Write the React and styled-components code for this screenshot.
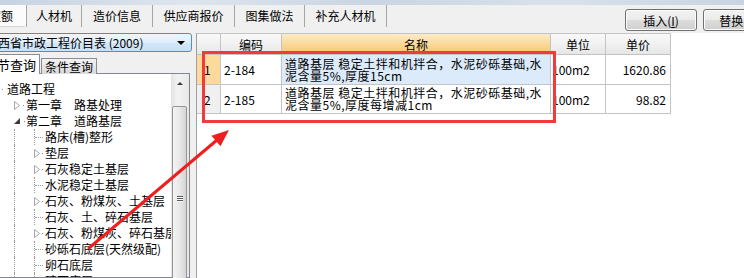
import React from 'react';
import styled, { createGlobalStyle } from 'styled-components';

const GlobalStyle = createGlobalStyle`
  html, body {
    margin: 0;
    padding: 0;
    background: #f0f0f0;
  }
  body {
    font-family: "Noto Sans CJK SC", "Liberation Sans", sans-serif;
    font-size: 12px;
    color: #000;
  }
`;

const tabs = [
  { label: '定额', width: 51, shift: -24, pad: 13, active: true },
  { label: '人材机', width: 55 },
  { label: '造价信息', width: 71 },
  { label: '供应商报价', width: 82 },
  { label: '图集做法', width: 70 },
  { label: '补充人材机', width: 82 },
];

const treeData = [
  { level: 0, text: '道路工程', type: 'root' },
  { level: 1, text: '第一章　路基处理', type: 'closed' },
  { level: 1, text: '第二章　道路基层', type: 'open' },
  { level: 2, text: '路床(槽)整形', type: 'leaf' },
  { level: 2, text: '垫层', type: 'closed' },
  { level: 2, text: '石灰稳定土基层', type: 'closed' },
  { level: 2, text: '水泥稳定土基层', type: 'leaf' },
  { level: 2, text: '石灰、粉煤灰、土基层', type: 'closed' },
  { level: 2, text: '石灰、土、碎石基层', type: 'leaf' },
  { level: 2, text: '石灰、粉煤灰、碎石基层', type: 'closed' },
  { level: 2, text: '砂砾石底层(天然级配)', type: 'leaf' },
  { level: 2, text: '卵石底层', type: 'leaf' },
  { level: 2, text: '碎石底层', type: 'leaf' },
];

const rows = [
  {
    no: 1,
    code: '2-184',
    name: ['道路基层 稳定土拌和机拌合，水泥砂砾基础,水', '泥含量5%,厚度15cm'],
    unit: '100m2',
    price: '1620.86',
    selected: true,
    height: 30,
  },
  {
    no: 2,
    code: '2-185',
    name: ['道路基层 稳定土拌和机拌合，水泥砂砾基础,水', '泥含量5%,厚度每增减1cm'],
    unit: '100m2',
    price: '98.82',
    height: 29,
  },
];

const Window = styled.div`
  position: relative;
  width: 744px;
  height: 278px;
  overflow: hidden;
  background: #f0f0f0;
  display: flex;
  flex-direction: column;
`;

const TitleStrip = styled.div`
  flex: none;
  height: 5px;
  background: linear-gradient(90deg, #c6d3e2 0%, #dde5ee 25%, #c9d5e3 50%, #d8e1eb 75%, #c8d4e2 100%);
`;

const TopBar = styled.div`
  flex: none;
  height: 28px;
  display: flex;
  align-items: flex-start;
  overflow: hidden;
`;

const TabStrip = styled.div`
  flex: none;
  display: flex;
  height: 22px;
`;

const Tab = styled.div`
  flex: none;
  box-sizing: border-box;
  width: ${(p) => p.$w}px;
  margin-left: ${(p) => p.$shift || 0}px;
  padding-left: ${(p) => p.$pad || 0}px;
  height: 22px;
  line-height: 22px;
  text-align: ${(p) => (p.$pad ? 'left' : 'center')};
  white-space: nowrap;
  overflow: hidden;
  border-right: 1px solid #a5a5a5;
  background: ${(p) => (p.$active ? '#fbfbfb' : '#f0f0f0')};
  box-shadow: ${(p) => (p.$active ? 'inset -1px 0 0 #ffffff, inset 0 -1px 0 #d5d5d5' : 'none')};
`;

const Spacer = styled.div`
  flex: none;
  width: ${(p) => p.$w}px;
`;

const ToolButton = styled.div`
  flex: none;
  box-sizing: border-box;
  width: 72px;
  height: 22px;
  margin-top: 4px;
  margin-right: 6px;
  border: 1px solid #707070;
  border-radius: 3px;
  background: linear-gradient(#f2f2f2 0%, #ebebeb 50%, #dddddd 51%, #cfcfcf 100%);
  box-shadow: inset 0 0 0 1px #fcfcfc;
  display: flex;
  align-items: center;
  justify-content: center;
  white-space: nowrap;
  font-size: 12px;
`;

const Mnemonic = styled.span`
  text-decoration: underline;
`;

const Body = styled.div`
  flex: 1;
  display: flex;
  min-height: 0;
`;

const LeftPanel = styled.div`
  flex: none;
  width: 192px;
  display: flex;
  flex-direction: column;
  overflow: hidden;
`;

const Dropdown = styled.div`
  flex: none;
  box-sizing: border-box;
  height: 19px;
  margin-left: -4px;
  width: 196px;
  border: 1px solid #4f8fc6;
  border-radius: 3px;
  background: linear-gradient(#eef6fd 0%, #e0eefb 50%, #d2e7f9 51%, #c8e1f7 100%);
  display: flex;
  align-items: center;
  overflow: hidden;
`;

const DropText = styled.span`
  flex: 1;
  margin-left: -11px;
  white-space: nowrap;
`;

const DropArrow = styled.span`
  flex: none;
  width: 0;
  height: 0;
  margin-right: 6px;
  border-left: 4px solid transparent;
  border-right: 4px solid transparent;
  border-top: 4px solid #000;
`;

const QueryTabs = styled.div`
  flex: none;
  height: 22px;
  display: flex;
  align-items: flex-end;
`;

const QueryTab = styled.div`
  flex: none;
  box-sizing: border-box;
  width: ${(p) => p.$w}px;
  margin-left: ${(p) => p.$shift || 0}px;
  height: ${(p) => (p.$active ? 20 : 16)}px;
  border: 1px solid #898c95;
  border-bottom: none;
  background: ${(p) => (p.$active ? '#ffffff' : 'linear-gradient(#f2f2f2, #dadada)')};
  display: flex;
  align-items: center;
  justify-content: ${(p) => (p.$active ? 'flex-end' : 'center')};
  padding-right: ${(p) => (p.$active ? 3 : 0)}px;
  white-space: nowrap;
  overflow: hidden;
  font-size: ${(p) => (p.$active ? 13 : 12)}px;
  position: relative;
  z-index: ${(p) => (p.$active ? 1 : 0)};
`;

const TreeBox = styled.div`
  flex: 1;
  box-sizing: border-box;
  width: 191px;
  margin-left: -1px;
  margin-top: -1px;
  border: 1px solid #828790;
  background: #fff;
  display: flex;
  min-height: 0;
`;

const TreeContent = styled.div`
  flex: 1;
  overflow: hidden;
  padding-top: 7px;
`;

const TreeRow = styled.div`
  display: flex;
  align-items: stretch;
  height: 16px;
  white-space: nowrap;
`;

const Indent = styled.div`
  flex: none;
  width: ${(p) => p.$w}px;
`;

const Guide = styled.div`
  flex: none;
  width: ${(p) => p.$w}px;
  box-sizing: border-box;
  border-left: 1px dotted #9a9a9a;
`;

const Branch = styled.div`
  flex: none;
  width: ${(p) => p.$w}px;
  display: flex;
  align-items: center;
`;

const LeafBranch = styled.div`
  flex: none;
  width: ${(p) => p.$w}px;
  box-sizing: border-box;
  border-left: 1px dotted #9a9a9a;
  display: flex;
  align-items: center;
`;

const HDots = styled.div`
  flex: 1;
  margin-right: 2px;
  border-top: 1px dotted #9a9a9a;
`;

const TreeText = styled.div`
  line-height: 16px;
`;

const Scrollbar = styled.div`
  flex: none;
  width: 17px;
  background: linear-gradient(90deg, #e4e4e4, #f2f2f2 40%, #eaeaea);
  display: flex;
  flex-direction: column;
  align-items: center;
  border-right: 1px solid #e6e6e6;
`;

const ScrollUp = styled.div`
  flex: none;
  height: 17px;
  width: 17px;
  display: flex;
  align-items: center;
  justify-content: center;
  padding-top: 2px;
  box-sizing: border-box;
`;

const UpGlyph = styled.span`
  width: 0;
  height: 0;
  border-left: 3px solid transparent;
  border-right: 3px solid transparent;
  border-bottom: 3px solid #3a3a3a;
`;

const Thumb = styled.div`
  flex: none;
  box-sizing: border-box;
  margin-top: 15px;
  width: 15px;
  height: 184px;
  border: 1px solid #959595;
  border-radius: 2px;
  background: linear-gradient(90deg, #f4f4f4 0%, #e8e8e8 50%, #d4d4d4 100%);
  display: flex;
  flex-direction: column;
  align-items: center;
  justify-content: center;
  gap: 1px;
`;

const Grip = styled.div`
  width: 6px;
  height: 1px;
  background: #5a5a5a;
  box-shadow: 0 1px 0 #ffffff;
`;

const Splitter = styled.div`
  flex: none;
  width: 4px;
`;

const RightPanel = styled.div`
  flex: 1;
  background: #fff;
  border-left: 1px solid #a0a0a0;
  min-width: 0;
`;

const Grid = styled.div`
  display: grid;
  grid-template-columns: 24px 61px 269px 55px 65px;
  width: 474px;
  border-top: 1px solid #c4c4c4;
`;

const HeadCell = styled.div`
  box-sizing: border-box;
  height: 21px;
  border-right: 1px solid #c4c4c4;
  border-bottom: 1px solid #c4c4c4;
  background: ${(p) =>
    p.$hot
      ? 'linear-gradient(#fdebc6 0%, #fbd99a 50%, #f5c56c 100%)'
      : 'linear-gradient(#f9f9f9 0%, #f1f1f1 50%, #e6e6e6 100%)'};
  display: flex;
  align-items: center;
  justify-content: center;
  font-size: 12px;
`;

const Cell = styled.div`
  box-sizing: border-box;
  height: ${(p) => p.$h}px;
  border-right: 1px solid #c4c4c4;
  border-bottom: 1px solid #c4c4c4;
  background: ${(p) => p.$bg || '#fff'};
  display: flex;
  align-items: center;
  justify-content: ${(p) => (p.$right ? 'flex-end' : 'flex-start')};
  padding: 0 ${(p) => p.$pr ?? 0}px 0 ${(p) => p.$pl ?? 3}px;
  white-space: nowrap;
  overflow: hidden;
  font-size: 12px;
`;

const NameLines = styled.div`
  display: flex;
  flex-direction: column;
  letter-spacing: 0.5px;
  line-height: 12px;
`;

const Highlight = styled.div`
  position: absolute;
  left: 202px;
  top: 51px;
  width: 354px;
  height: 72px;
  box-sizing: border-box;
  border: 3px solid #f23a3a;
  pointer-events: none;
`;

const Arrow = styled.svg`
  position: absolute;
  left: 0;
  top: 0;
  pointer-events: none;
`;

function Expander({ type }) {
  if (type === 'open') {
    return (
      <svg width="7" height="7" viewBox="0 0 7 7">
        <polygon points="6,0 6,6 0,6" fill="#3c3c3c" />
      </svg>
    );
  }
  return (
    <svg width="6" height="9" viewBox="0 0 6 9">
      <polygon points="0.5,0.5 5.5,4.5 0.5,8.5" fill="#fff" stroke="#a6a6a6" strokeWidth="1" />
    </svg>
  );
}

const Dot = styled.span`
  width: 1px;
  height: 1px;
  margin-left: ${(p) => p.$ml}px;
  background: #8a8a8a;
`;

function TreeItem({ level, text, type }) {
  if (level === 0) {
    return (
      <TreeRow>
        <Branch $w={7}>
          <Dot $ml={2} />
        </Branch>
        <TreeText>{text}</TreeText>
      </TreeRow>
    );
  }
  if (level === 1) {
    return (
      <TreeRow>
        <Indent $w={14} />
        <Branch $w={12}>
          <Expander type={type} />
          <Dot $ml={3} />
        </Branch>
        <TreeText>{text}</TreeText>
      </TreeRow>
    );
  }
  return (
    <TreeRow>
      <Indent $w={14} />
      <Guide $w={20} />
      {type === 'leaf' ? (
        <LeafBranch $w={11}>
          <HDots />
        </LeafBranch>
      ) : (
        <Branch $w={11}>
          <Expander type={type} />
          <Dot $ml={2} />
        </Branch>
      )}
      <TreeText>{text}</TreeText>
    </TreeRow>
  );
}

export default function App() {
  return (
    <Window>
      <GlobalStyle />
      <TitleStrip />
      <TopBar>
        <TabStrip>
          {tabs.map((t) => (
            <Tab key={t.label} $w={t.width} $shift={t.shift} $pad={t.pad} $active={t.active}>
              {t.label}
            </Tab>
          ))}
        </TabStrip>
        <Spacer $w={238} />
        <ToolButton>
          插入(<Mnemonic>I</Mnemonic>)
        </ToolButton>
        <ToolButton>
          替换(<Mnemonic>R</Mnemonic>)
        </ToolButton>
      </TopBar>
      <Body>
        <LeftPanel>
          <Dropdown>
            <DropText>江西省市政工程价目表 (2009)</DropText>
            <DropArrow />
          </Dropdown>
          <QueryTabs>
            <QueryTab $active $w={60} $shift={-20}>
              章节查询
            </QueryTab>
            <QueryTab $w={56} $shift={1}>
              条件查询
            </QueryTab>
          </QueryTabs>
          <TreeBox>
            <TreeContent>
              {treeData.map((item) => (
                <TreeItem key={item.text} {...item} />
              ))}
            </TreeContent>
            <Scrollbar>
              <ScrollUp>
                <UpGlyph />
              </ScrollUp>
              <Thumb>
                <Grip />
                <Grip />
                <Grip />
              </Thumb>
            </Scrollbar>
          </TreeBox>
        </LeftPanel>
        <Splitter />
        <RightPanel>
          <Grid>
            <HeadCell />
            <HeadCell>编码</HeadCell>
            <HeadCell $hot>名称</HeadCell>
            <HeadCell>单位</HeadCell>
            <HeadCell>单价</HeadCell>
            {rows.map((r) => (
              <React.Fragment key={r.no}>
                <Cell $h={r.height} $pl={7} $bg={r.selected ? '#fdd99b' : '#f0f0f0'}>
                  {r.no}
                </Cell>
                <Cell $h={r.height} $pl={3}>
                  {r.code}
                </Cell>
                <Cell $h={r.height} $pl={3} $bg={r.selected ? '#dcebfb' : '#fff'}>
                  <NameLines>
                    {r.name.map((line) => (
                      <span key={line}>{line}</span>
                    ))}
                  </NameLines>
                </Cell>
                <Cell $h={r.height} $pl={1}>
                  {r.unit}
                </Cell>
                <Cell $h={r.height} $right $pl={0} $pr={4}>
                  {r.price}
                </Cell>
              </React.Fragment>
            ))}
          </Grid>
        </RightPanel>
      </Body>
      <Highlight />
      <Arrow width="744" height="278" viewBox="0 0 744 278">
        <line x1="89" y1="248" x2="217" y2="140" stroke="#ee1f1f" strokeWidth="3" strokeLinecap="round" />
        <polygon points="229,130 220.5,146.3 211.5,135.7" fill="#ee1f1f" />
      </Arrow>
    </Window>
  );
}
